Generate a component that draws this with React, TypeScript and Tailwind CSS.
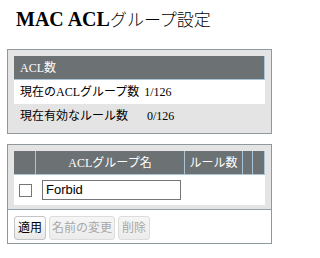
import React from 'react';

const serif = "font-['Liberation_Serif','Noto_Sans_CJK_JP',serif]";
const sans = "font-['Liberation_Sans','Noto_Sans_CJK_JP',sans-serif]";

const App: React.FC = () => {
    return (
        <div className="w-[280px] h-[258px] bg-white overflow-hidden pt-[5px]">
            {/* Title */}
            <h1 className="pl-[16px] h-[28px] leading-[28px] text-[20px] text-black whitespace-nowrap">
                <span className="font-['Liberation_Serif',serif] font-bold">MAC ACL</span>
                <span className="font-['Noto_Sans_CJK_JP',sans-serif] font-light text-[17px]">グループ設定</span>
            </h1>

            {/* ACL count box */}
            <div className={`mt-[16px] mx-[7px] w-[265px] border border-[#8e999e] bg-[#e4e4e4] px-[6px] pt-[6px] pb-[5px] ${serif} text-[12px]`}>
                <div className="h-[24px] flex items-center px-[6px] bg-[#6c7173] text-white border-r border-b border-[#a9c4d6]">
                    ACL数
                </div>
                <div className="h-[24px] flex items-center px-[6px] bg-white text-black">
                    <span>現在のACLグループ数</span>
                    <span className="ml-[5px]">1/126</span>
                </div>
                <div className="h-[24px] flex items-center px-[6px] text-black">
                    <span>現在有効なルール数</span>
                    <span className="ml-[19px]">0/126</span>
                </div>
            </div>

            {/* Group table box */}
            <div className="mt-[10px] mx-[7px] w-[265px] border border-[#8e999e] bg-white">
                <div className="bg-[#e4e4e4] px-[6px] pt-[6px] pb-[4px]">
                    <div className={`h-[24px] flex bg-[#6c7173] text-white text-[12px] border-b border-r border-[#a9c4d6] ${serif}`}>
                        <div className="w-[22px] border-r border-[#a9c4d6]" />
                        <div className="w-[149px] border-r border-[#a9c4d6] flex items-center justify-center">ACLグループ名</div>
                        <div className="w-[58px] border-r border-[#a9c4d6] flex items-center justify-center">ルール数</div>
                        <div className="w-[10px] border-r border-[#a9c4d6]" />
                        <div className="flex-1" />
                    </div>
                    <div className="h-[30px] flex items-center bg-white">
                        <div className="w-[22px] flex justify-center">
                            <div className="w-[13px] h-[13px] border border-[#767676] bg-white" />
                        </div>
                        <div className="ml-[6px] w-[139px] h-[20px] border border-[#767676] flex items-center px-[3px] text-[13px] text-black font-['Liberation_Sans',sans-serif]">
                            Forbid
                        </div>
                    </div>
                </div>
                <div className={`border-t border-[#8fa2ad] flex gap-[3px] px-[6px] pt-[6px] pb-[3px] text-[12px] ${sans}`}>
                    <button className="h-[24px] px-[3px] rounded-[3px] border border-[#c4c4c4] bg-gradient-to-b from-white to-[#e8e8e8] text-black">適用</button>
                    <button className="h-[24px] px-[2px] rounded-[3px] border border-[#dcdcdc] bg-gradient-to-b from-[#f6f6f6] to-[#ececec] text-[#a8a8a8]">名前の変更</button>
                    <button className="h-[24px] px-[3px] rounded-[3px] border border-[#dcdcdc] bg-gradient-to-b from-[#f6f6f6] to-[#ececec] text-[#a8a8a8]">削除</button>
                </div>
            </div>
        </div>
    );
};

export default App;
